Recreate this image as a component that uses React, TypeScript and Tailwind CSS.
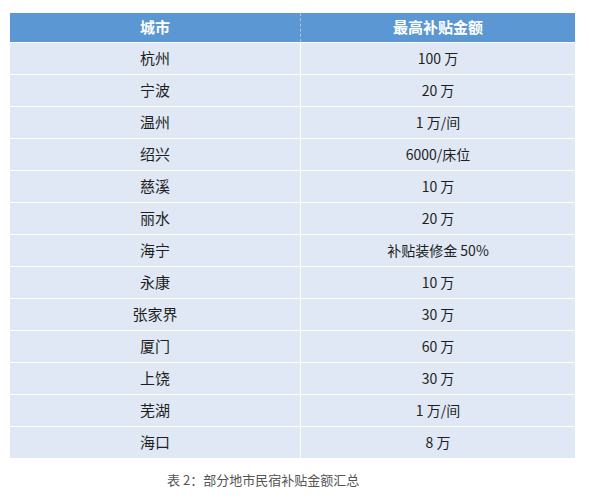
import React from "react";

const rows: [string, string][] = [
	["杭州", "100 万"],
	["宁波", "20 万"],
	["温州", "1 万/间"],
	["绍兴", "6000/床位"],
	["慈溪", "10 万"],
	["丽水", "20 万"],
	["海宁", "补贴装修金 50%"],
	["永康", "10 万"],
	["张家界", "30 万"],
	["厦门", "60 万"],
	["上饶", "30 万"],
	["芜湖", "1 万/间"],
	["海口", "8 万"],
];

const font = {
	fontFamily: '"Noto Sans CJK SC", "Liberation Sans", sans-serif',
};

const App = () => {
	return (
		<div className="w-[589px] h-[499px] bg-white pt-[13px]" style={font}>
			<div className="ml-[10px] w-[565px]">
				{/* header */}
				<div className="flex h-[29px] bg-[#5b97d2] text-white text-[15px] font-bold">
					<div className="w-[291px] flex items-center justify-center border-r border-dashed border-[#a8c8ea]">
						城市
					</div>
					<div className="flex-1 flex items-center justify-center">
						最高补贴金额
					</div>
				</div>

				{/* rows */}
				{rows.map(([city, amount], index) => (
					<div
						key={index}
						className="flex h-[32px] bg-[#dfe8f4] border-t border-white text-[15px] text-[#1e1e1e]"
					>
						<div className="w-[291px] flex items-center justify-center border-r border-white">
							{city}
						</div>
						<div className="flex-1 flex items-center justify-center text-[14px]">
							{amount}
						</div>
					</div>
				))}
			</div>

			<div className="mt-[12px] pl-[167px] text-[13px] leading-[20px] text-[#555555]">
				表 2：部分地市民宿补贴金额汇总
			</div>
		</div>
	);
};

export default App;
